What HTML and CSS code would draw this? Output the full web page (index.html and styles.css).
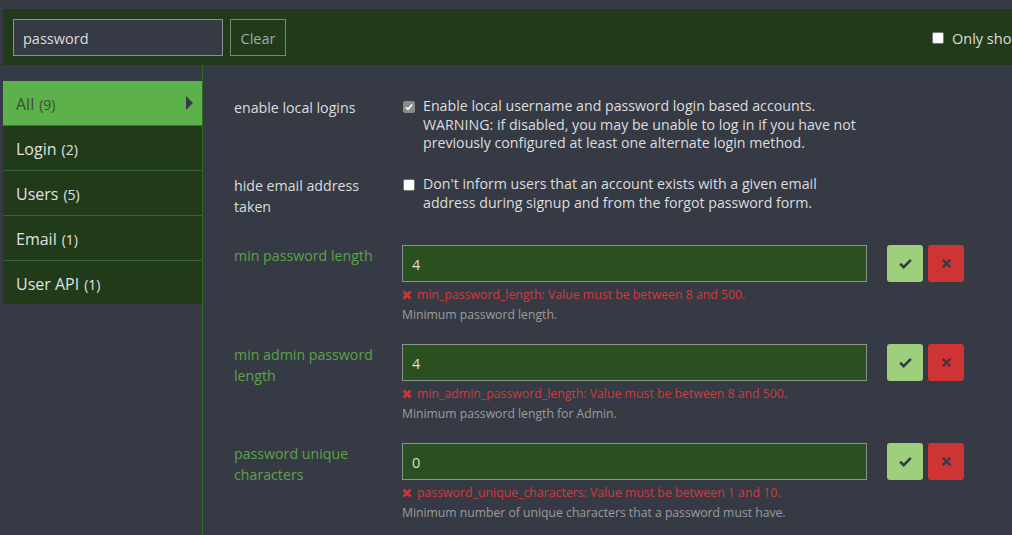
FILE: index.html
```html
<!DOCTYPE html>
<html lang="en">
<head>
  <meta charset="UTF-8" />
  <title>Site Settings</title>
  <link rel="stylesheet" href="styles.css">
</head>
<body>
  <div class="filter-bar">
    <input class="filter-input" value="password" />
    <button class="clear-btn">Clear</button>
    <label class="only-overridden"><span class="box"></span> Only show overridden</label>
  </div>

  <div class="settings">
    <nav class="nav">
      <a class="nav-item active">All <span class="count">(9)</span><span class="arrow"></span></a>
      <a class="nav-item">Login <span class="count">(2)</span></a>
      <a class="nav-item">Users <span class="count">(5)</span></a>
      <a class="nav-item">Email <span class="count">(1)</span></a>
      <a class="nav-item">User API <span class="count">(1)</span></a>
    </nav>

    <div class="content">
      <div class="setting">
        <div class="setting-label">enable local logins</div>
        <div class="setting-value">
          <label class="check-row">
            <span class="box checked">
              <svg viewBox="0 0 12 12" width="10" height="10"><path d="M2.2 6.2 L4.8 8.8 L9.8 3" fill="none" stroke="#fff" stroke-width="1.8"/></svg>
            </span>
            <span class="check-text">Enable local username and password login based accounts. WARNING: if disabled, you may be unable to log in if you have not previously configured at least one alternate login method.</span>
          </label>
        </div>
      </div>

      <div class="setting">
        <div class="setting-label">hide email address taken</div>
        <div class="setting-value">
          <label class="check-row">
            <span class="box"></span>
            <span class="check-text">Don't inform users that an account exists with a given email address during signup and from the forgot password form.</span>
          </label>
        </div>
      </div>

      <div class="setting dirty">
        <div class="setting-label">min password length</div>
        <div class="setting-value">
          <input class="value-input" value="4" />
          <div class="error"><svg class="err-x" viewBox="0 0 10 10" width="10" height="10"><path d="M1.5 1.5 L8.5 8.5 M8.5 1.5 L1.5 8.5" stroke="#d03434" stroke-width="2.8"/></svg>min_password_length: Value must be between 8 and 500.</div>
          <div class="desc">Minimum password length.</div>
        </div>
        <div class="setting-controls">
          <button class="ok">
            <svg viewBox="0 0 16 16" width="15" height="15"><path d="M2.3 8.3 L6.1 11.9 L13.7 4.2" fill="none" stroke="#363a45" stroke-width="2.8"/></svg>
          </button>
          <button class="cancel">
            <svg viewBox="0 0 16 16" width="11" height="11"><path d="M2.5 2.5 L13.5 13.5 M13.5 2.5 L2.5 13.5" fill="none" stroke="#363a45" stroke-width="3.4"/></svg>
          </button>
        </div>
      </div>

      <div class="setting dirty">
        <div class="setting-label">min admin password length</div>
        <div class="setting-value">
          <input class="value-input" value="4" />
          <div class="error"><svg class="err-x" viewBox="0 0 10 10" width="10" height="10"><path d="M1.5 1.5 L8.5 8.5 M8.5 1.5 L1.5 8.5" stroke="#d03434" stroke-width="2.8"/></svg>min_admin_password_length: Value must be between 8 and 500.</div>
          <div class="desc">Minimum password length for Admin.</div>
        </div>
        <div class="setting-controls">
          <button class="ok">
            <svg viewBox="0 0 16 16" width="15" height="15"><path d="M2.3 8.3 L6.1 11.9 L13.7 4.2" fill="none" stroke="#363a45" stroke-width="2.8"/></svg>
          </button>
          <button class="cancel">
            <svg viewBox="0 0 16 16" width="11" height="11"><path d="M2.5 2.5 L13.5 13.5 M13.5 2.5 L2.5 13.5" fill="none" stroke="#363a45" stroke-width="3.4"/></svg>
          </button>
        </div>
      </div>

      <div class="setting dirty">
        <div class="setting-label">password unique characters</div>
        <div class="setting-value">
          <input class="value-input" value="0" />
          <div class="error"><svg class="err-x" viewBox="0 0 10 10" width="10" height="10"><path d="M1.5 1.5 L8.5 8.5 M8.5 1.5 L1.5 8.5" stroke="#d03434" stroke-width="2.8"/></svg>password_unique_characters: Value must be between 1 and 10.</div>
          <div class="desc">Minimum number of unique characters that a password must have.</div>
        </div>
        <div class="setting-controls">
          <button class="ok">
            <svg viewBox="0 0 16 16" width="15" height="15"><path d="M2.3 8.3 L6.1 11.9 L13.7 4.2" fill="none" stroke="#363a45" stroke-width="2.8"/></svg>
          </button>
          <button class="cancel">
            <svg viewBox="0 0 16 16" width="11" height="11"><path d="M2.5 2.5 L13.5 13.5 M13.5 2.5 L2.5 13.5" fill="none" stroke="#363a45" stroke-width="3.4"/></svg>
          </button>
        </div>
      </div>
    </div>
  </div>
</body>
</html>
```

FILE: styles.css
```css
body {
  margin: 0;
  background: #363a45;
  color: #dddddd;
  font-family: 'Open Sans', sans-serif;
  font-size: 14.2px;
  overflow: hidden;
}

.filter-bar {
  display: flex;
  align-items: center;
  margin: 9px 0 0 3px;
  height: 56px;
  padding-left: 10px;
  background: #213b1a;
  white-space: nowrap;
  overflow: hidden;
}

.filter-input {
  box-sizing: border-box;
  flex-shrink: 0;
  width: 210px;
  height: 37px;
  padding: 2px 9px 0;
  background: #363a45;
  border: 1px solid #8c8f8c;
  color: #dddddd;
  font-family: inherit;
  font-size: 14.5px;
  outline: none;
}

.clear-btn {
  box-sizing: border-box;
  flex-shrink: 0;
  height: 37px;
  width: 56px;
  margin-left: 7px;
  padding: 2px 0 0;
  background: #213b1a;
  border: 1px solid #7d867b;
  color: #a5a8a5;
  font-family: inherit;
  font-size: 14.5px;
}

.only-overridden {
  display: flex;
  align-items: center;
  flex-shrink: 0;
  margin-left: 646px;
  padding-top: 2px;
  font-size: 14.5px;
  color: #dddddd;
}

.only-overridden .box {
  margin-right: 8px;
}

.box {
  box-sizing: border-box;
  display: inline-flex;
  align-items: center;
  justify-content: center;
  flex-shrink: 0;
  width: 12px;
  height: 12px;
  background: #ffffff;
  border: 1px solid #767676;
  border-radius: 2px;
}

.box.checked {
  background: #8a8a8a;
  border-color: #8a8a8a;
}

.settings {
  display: flex;
  min-height: 470px;
}

.nav {
  width: 199px;
  padding: 16px 0 0 3px;
}

.nav-item {
  position: relative;
  display: flex;
  align-items: baseline;
  height: 44px;
  line-height: 46px;
  overflow: hidden;
  padding-left: 13px;
  background: #203a1a;
  border-bottom: 1px solid #39602f;
  color: #e1e1e1;
  font-size: 16px;
}

.nav-item:last-child {
  border-bottom: none;
  height: 43px;
}

.nav-item .count {
  margin-left: 5px;
  font-size: 14px;
}

.nav-item.active {
  background: #5db14a;
  color: #3d4a3c;
  border-bottom-color: #3c7a2e;
}

.arrow {
  position: absolute;
  right: 9px;
  top: 15px;
  border-left: 7px solid #363a45;
  border-top: 7px solid transparent;
  border-bottom: 7px solid transparent;
}

.content {
  flex: 1;
  border-left: 1px solid #2f6b21;
  padding: 32px 0 0 31px;
}

.setting {
  display: flex;
  align-items: flex-start;
  margin-bottom: 20px;
}

.setting-label {
  box-sizing: border-box;
  width: 168px;
  padding: 0 18px 8px 0;
  line-height: 21px;
  font-size: 14.2px;
  color: #dcdcdc;
}

.dirty .setting-label {
  color: #59a446;
}

.setting-value {
  width: 465px;
}

.check-row {
  display: flex;
  align-items: flex-start;
  padding-bottom: 2px;
}

.check-row .box {
  margin: 4px 8px 0 1px;
}

.check-text {
  width: 444px;
  line-height: 18.7px;
}

.value-input {
  box-sizing: border-box;
  width: 465px;
  height: 37px;
  padding: 1px 9px 0;
  background: #2a4f20;
  border: 1px solid #8b948a;
  color: #dddddd;
  font-family: inherit;
  font-size: 14.5px;
  outline: none;
}

.error {
  display: flex;
  align-items: center;
  margin-top: 4px;
  font-size: 12.3px;
  line-height: 18px;
  color: #d03a3a;
}

.err-x {
  margin: 0 5px 0 0;
}

.desc {
  margin-top: 2px;
  font-size: 12.2px;
  line-height: 18px;
  color: #9c9c9c;
}

.setting-controls {
  display: flex;
  gap: 5px;
  margin-left: 20px;
}

.setting-controls button {
  display: flex;
  align-items: center;
  justify-content: center;
  width: 36px;
  height: 37px;
  border: none;
  border-radius: 3px;
  padding: 0;
}

.ok {
  background: #9dcf7c;
}

.cancel {
  background: #cf3434;
}
```
